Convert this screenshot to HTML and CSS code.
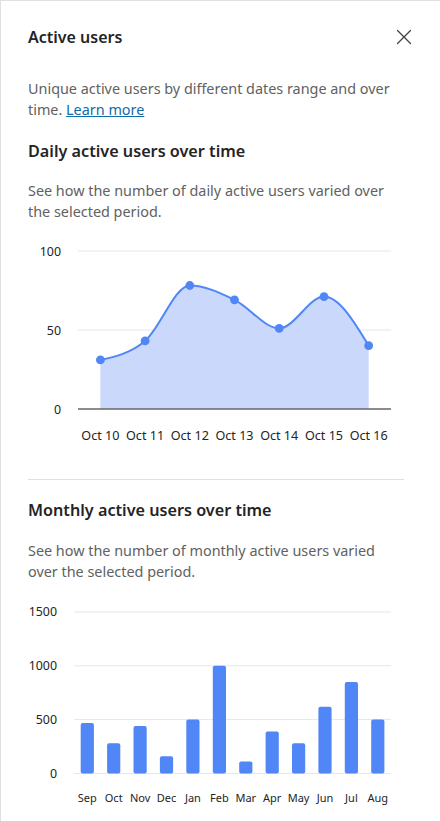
FILE: index.html
```html
<!DOCTYPE html>
<html lang="en">
<head>
<meta charset="utf-8">
<title>Active users</title>
<link rel="stylesheet" href="styles.css">
</head>
<body>
<div class="panel">
  <header class="header">
    <h1 class="title">Active users</h1>
    <button class="close" aria-label="Close">
      <svg width="20" height="20" viewBox="0 0 20 20"><path d="M3.5 3.5 L16.5 16.5 M16.5 3.5 L3.5 16.5" stroke="#424242" stroke-width="1.3" fill="none" stroke-linecap="round"/></svg>
    </button>
  </header>
  <div class="content">
    <p class="desc intro">Unique active users by different dates range and over time. <a class="link" href="#">Learn more</a></p>

    <section class="section">
      <h2 class="subtitle">Daily active users over time</h2>
      <p class="desc">See how the number of daily active users varied over the selected period.</p>
      <svg class="chart chart-line" width="375" height="215" viewBox="0 0 375 215">
        <g class="grid">
          <line x1="50" y1="16" x2="363" y2="16"/>
          <line x1="50" y1="95" x2="363" y2="95"/>
        </g>
        <g class="ylabels">
          <text x="33" y="16">100</text>
          <text x="33" y="95">50</text>
          <text x="33" y="174">0</text>
        </g>
        <path class="area" d="M72.4 124.9 C87.3 121.6 102.2 118.3 117.1 105.9 C132 93.5 146.9 50.5 161.8 50.5 C176.7 50.5 191.6 57.7 206.5 64.8 C221.4 71.9 236.3 93.3 251.2 93.3 C266.1 93.3 281.1 61.6 296 61.6 C310.9 61.6 325.8 86.15 340.7 110.7 L340.7 174 L72.4 174 Z"/>
        <line class="axis" x1="50" y1="174" x2="363" y2="174"/>
        <path class="curve" d="M72.4 124.9 C87.3 121.6 102.2 118.3 117.1 105.9 C132 93.5 146.9 50.5 161.8 50.5 C176.7 50.5 191.6 57.7 206.5 64.8 C221.4 71.9 236.3 93.3 251.2 93.3 C266.1 93.3 281.1 61.6 296 61.6 C310.9 61.6 325.8 86.15 340.7 110.7"/>
        <g class="dots">
          <circle cx="72.4" cy="124.9" r="4.4"/>
          <circle cx="117.1" cy="105.9" r="4.4"/>
          <circle cx="161.8" cy="50.5" r="4.4"/>
          <circle cx="206.5" cy="64.8" r="4.4"/>
          <circle cx="251.2" cy="93.3" r="4.4"/>
          <circle cx="296" cy="61.6" r="4.4"/>
          <circle cx="340.7" cy="110.7" r="4.4"/>
        </g>
        <g class="xlabels">
          <text x="72.4" y="200">Oct 10</text>
          <text x="117.1" y="200">Oct 11</text>
          <text x="161.8" y="200">Oct 12</text>
          <text x="206.5" y="200">Oct 13</text>
          <text x="251.2" y="200">Oct 14</text>
          <text x="296" y="200">Oct 15</text>
          <text x="340.7" y="200">Oct 16</text>
        </g>
      </svg>
    </section>

    <hr class="divider">

    <section class="section">
      <h2 class="subtitle">Monthly active users over time</h2>
      <p class="desc">See how the number of monthly active users varied over the selected period.</p>
      <svg class="chart chart-bar" width="375" height="221" viewBox="0 0 375 221">
        <g class="grid">
          <line x1="46" y1="11.9" x2="363" y2="11.9"/>
          <line x1="46" y1="65.8" x2="363" y2="65.8"/>
          <line x1="46" y1="119.6" x2="363" y2="119.6"/>
          <line x1="46" y1="173.5" x2="363" y2="173.5"/>
        </g>
        <g class="ylabels">
          <text x="29" y="11.9">1500</text>
          <text x="29" y="65.8">1000</text>
          <text x="29" y="119.6">500</text>
          <text x="29" y="173.5">0</text>
        </g>
        <g class="bars">
          <rect x="52.7" y="122.9" width="13.2" height="50.6" rx="2"/>
          <rect x="79.1" y="143.3" width="13.2" height="30.2" rx="2"/>
          <rect x="105.5" y="126.1" width="13.2" height="47.4" rx="2"/>
          <rect x="131.9" y="156.3" width="13.2" height="17.2" rx="2"/>
          <rect x="158.3" y="119.6" width="13.2" height="53.9" rx="2"/>
          <rect x="184.8" y="65.8" width="13.2" height="107.7" rx="2"/>
          <rect x="211.2" y="161.6" width="13.2" height="11.9" rx="2"/>
          <rect x="237.6" y="131.5" width="13.2" height="42.0" rx="2"/>
          <rect x="264.0" y="143.3" width="13.2" height="30.2" rx="2"/>
          <rect x="290.4" y="106.7" width="13.2" height="66.8" rx="2"/>
          <rect x="316.8" y="81.9" width="13.2" height="91.6" rx="2"/>
          <rect x="343.2" y="119.6" width="13.2" height="53.9" rx="2"/>
        </g>
        <g class="xlabels small">
          <text x="59.3" y="197">Sep</text>
          <text x="85.7" y="197">Oct</text>
          <text x="112.1" y="197">Nov</text>
          <text x="138.5" y="197">Dec</text>
          <text x="164.9" y="197">Jan</text>
          <text x="191.4" y="197">Feb</text>
          <text x="217.8" y="197">Mar</text>
          <text x="244.2" y="197">Apr</text>
          <text x="270.6" y="197">May</text>
          <text x="297.0" y="197">Jun</text>
          <text x="323.4" y="197">Jul</text>
          <text x="349.8" y="197">Aug</text>
        </g>
      </svg>
    </section>
  </div>
</div>
</body>
</html>
```

FILE: styles.css
```css
html, body {
  margin: 0;
  padding: 0;
  background: #ffffff;
}

body {
  font-family: "Noto Sans", "Open Sans", sans-serif;
  color: #242424;
}

.panel {
  width: 440px;
  height: 821px;
  box-sizing: border-box;
  border-top: 1px solid #e0e0e0;
  border-left: 1px solid #e0e0e0;
  overflow: hidden;
  background: #fff;
}

.header {
  display: flex;
  align-items: center;
  justify-content: space-between;
  padding: 25px 26px 0 27px;
}

.title {
  margin: 0;
  font-size: 16px;
  line-height: 22px;
  font-weight: 600;
  color: #242424;
}

.close {
  width: 20px;
  height: 20px;
  padding: 0;
  border: 0;
  background: transparent;
  display: flex;
}

.content {
  display: flex;
  flex-direction: column;
  padding: 0 36px 0 27px;
}

.desc {
  margin: 18px 0 0;
  font-size: 14.4px;
  line-height: 21px;
  color: #616161;
}

.intro {
  margin-top: 30px;
}

.link {
  color: #0f6ca8;
  text-decoration: underline;
  text-underline-offset: 1px;
}

.section {
  display: flex;
  flex-direction: column;
}

.subtitle {
  margin: 20px 0 0;
  font-size: 16.2px;
  line-height: 22px;
  font-weight: 600;
  color: #242424;
}

.chart {
  display: block;
  margin-top: 13px;
  overflow: visible;
}

.chart-bar {
  margin-top: 18px;
}

.divider {
  margin: 29px 0 0;
  border: 0;
  border-top: 1px solid #e0e0e0;
  height: 0;
}

.divider + .section .subtitle {
  margin-top: 19px;
}

.divider + .section .desc {
  margin-top: 19px;
}

.grid line {
  stroke: #e6e6e6;
  stroke-width: 1;
}

.axis {
  stroke: #666666;
  stroke-width: 1.5;
}

.ylabels text {
  font-size: 12.4px;
  fill: #242424;
  text-anchor: end;
  dominant-baseline: central;
}

.xlabels text {
  font-size: 12.6px;
  fill: #242424;
  text-anchor: middle;
  dominant-baseline: central;
}

.xlabels.small text {
  font-size: 11px;
}

.area {
  fill: #c9d8fb;
  stroke: none;
}

.curve {
  fill: none;
  stroke: #5086f5;
  stroke-width: 2;
}

.dots circle {
  fill: #5086f5;
}

.bars rect {
  fill: #5086f5;
}
```
